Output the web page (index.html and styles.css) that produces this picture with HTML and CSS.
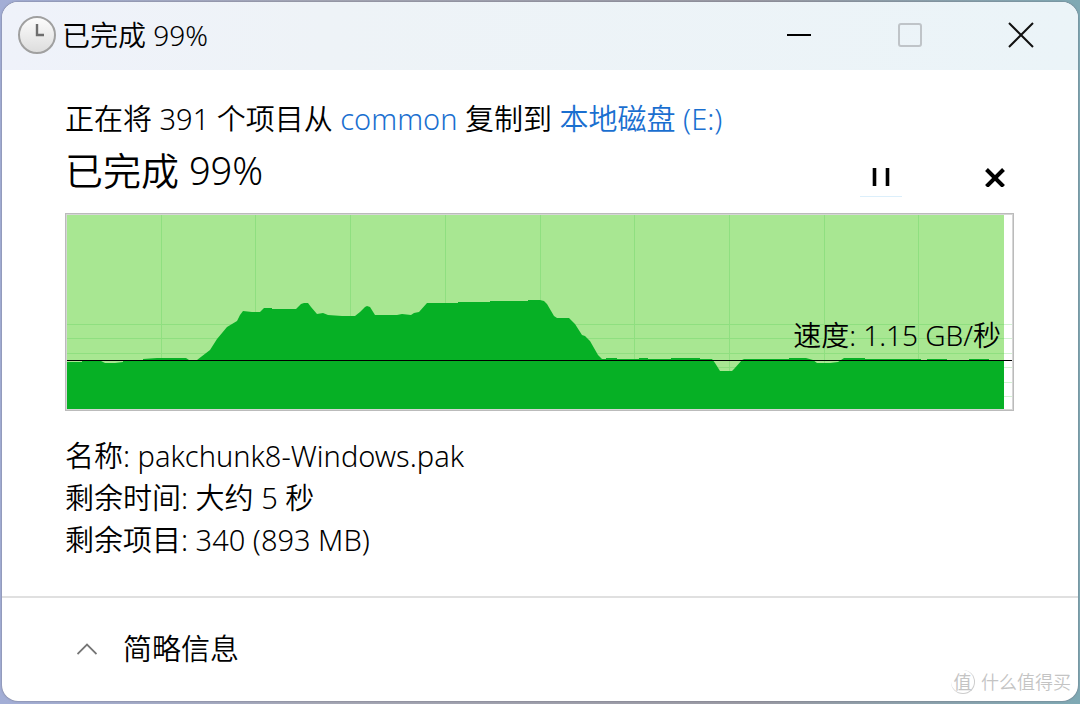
FILE: index.html
```
<!DOCTYPE html>
<html lang="zh-CN">
<head>
    <meta charset="UTF-8">
    <meta name="viewport" content="width=device-width, initial-scale=1.0">
    <title>已完成 99%</title>
    <link rel="stylesheet" href="styles.css">
</head>
<body>
    <div class="window">
        <header class="titlebar">
            <svg class="clock" viewBox="0 0 40 40" aria-hidden="true">
                <defs>
                    <linearGradient id="face" x1="0" y1="0" x2="0" y2="1">
                        <stop offset="0" stop-color="#fdfdfd"/>
                        <stop offset="1" stop-color="#dcdcdc"/>
                    </linearGradient>
                </defs>
                <circle cx="20" cy="20" r="18" fill="url(#face)" stroke="#a0a0a0" stroke-width="2"/>
                <path d="M20 9v11h7" fill="none" stroke="#6e6e6e" stroke-width="2.4"/>
            </svg>
            <span class="caption">已完成 99%</span>
            <div class="window-buttons">
                <button type="button" aria-label="最小化">
                    <svg viewBox="0 0 24 24"><path d="M0 12h24" stroke="#000" stroke-width="2"/></svg>
                </button>
                <button type="button" aria-label="最大化" disabled>
                    <svg viewBox="0 0 24 24"><rect x="1" y="1" width="22" height="22" rx="2" fill="none" stroke="#bfc4c8" stroke-width="2"/></svg>
                </button>
                <button type="button" aria-label="关闭">
                    <svg viewBox="0 0 24 24"><path d="M0 0l24 24M24 0L0 24" stroke="#111" stroke-width="2"/></svg>
                </button>
            </div>
        </header>

        <main class="content">
            <p class="summary">正在将 391 个项目从 <a href="#">common</a> 复制到 <a href="#">本地磁盘 (E:)</a></p>
            <div class="progress-row">
                <h1>已完成 99%</h1>
                <div class="actions">
                    <button type="button" class="pause" aria-label="暂停">
                        <svg viewBox="0 0 20 20"><path d="M3.5 1v18M16.5 1v18" stroke="#000" stroke-width="3.6"/></svg>
                    </button>
                    <button type="button" aria-label="取消">
                        <svg viewBox="0 0 20 20"><path d="M1.5 2.5l17 17M18.5 2.5l-17 17" stroke="#000" stroke-width="4"/></svg>
                    </button>
                </div>
            </div>

            <div class="chart">
                <svg viewBox="0 0 945 194" aria-hidden="true">
                    <path class="row-line" d="M0 109.5h945M0 123.5h945M0 138.5h945M0 152.5h945M0 167.5h945M0 181.5h945"/>
                    <rect class="done" width="937" height="194"/>
                    <path class="grid" d="M0 109.5h937M0 123.5h937M0 138.5h937M0 152.5h937M94.5 0v194M188.5 0v194M283.5 0v194M378.5 0v194M473.5 0v194M567.5 0v194M662.5 0v194M757.5 0v194M851.5 0v194"/>
                    <path class="speed" d="M0 194V147H15V146H34L38 148H48L56 147V146H76V144L90 143H119L122 145H130L143 135L150 124L160 112L170 106L173 100L176 96L185 97H193L197 93H205V94H229L234 89L237 88H241L244 92L250 99L256 98L261 100L275 101H288L293 97L298 92L300 91L303 92L308 100H330L335 99L344 100L347 98L352 97L360 88H391V87H423V86H461V85H473L477 86L480 89L487 101L490 103H502L508 109L515 120L518 121L523 126L531 140L535 144H539V143H550V144H572V143H581V144H604V143H633V144H645L648 148L653 156H665L667 154L675 145L677 144H722V143H739L746 145L750 148H763L771 147L777 143H798V144H854V145H860V144H880V145H902V144H922V145H937V194Z"/>
                    <path class="now" d="M0 145.5h945"/>
                </svg>
                <span class="rate">速度: 1.15 GB/秒</span>
            </div>

            <div class="details">
                <p>名称: pakchunk8-Windows.pak</p>
                <p>剩余时间: 大约 5 秒</p>
                <p>剩余项目: 340 (893 MB)</p>
            </div>
        </main>

        <footer class="footer">
            <button type="button" class="toggle">
                <svg viewBox="0 0 20 12" aria-hidden="true"><path d="M0.5 11L10 1.5L19.5 11" fill="none" stroke="#777" stroke-width="1.8"/></svg>
                简略信息
            </button>
            <div class="watermark"><span class="badge">值</span>什么值得买</div>
        </footer>
    </div>
</body>
</html>
```
FILE: styles.css
```
* {
    box-sizing: border-box;
}
body {
    margin: 0;
    padding: 2px 2px 3px;
    min-height: 100vh;
    display: flex;
    background: linear-gradient(90deg, #a3aed6, #a5a7b5 30%, #9a9aa4 70%, #7fa9b4);
    font-family: "Noto Sans", "Noto Sans CJK SC", sans-serif;
    font-size: 29px;
    font-weight: 350;
    line-height: 42px;
    color: #000;
}
.window {
    flex: 1;
    display: flex;
    flex-direction: column;
    background: #fff;
    border-radius: 16px;
    box-shadow: 0 0 2px #667;
    overflow: hidden;
}
p, h1 {
    margin: 0;
}
button {
    display: flex;
    align-items: center;
    justify-content: center;
    padding: 0;
    border: none;
    background: none;
    font: inherit;
    color: inherit;
}
a {
    color: #1a6fd0;
    text-decoration: none;
}

/* title bar */
.titlebar {
    display: flex;
    align-items: center;
    height: 68px;
    padding: 0 2px 2px 15px;
    background: linear-gradient(90deg, #eff2fa, #eef3f7 30%, #ebf4f8);
}
.clock {
    width: 40px;
    height: 40px;
}
.caption {
    padding-left: 5px;
    font-size: 28px;
}
.window-buttons {
    display: flex;
    margin-left: auto;
}
.window-buttons button {
    width: 111px;
    height: 64px;
}
.window-buttons svg {
    width: 24px;
    height: 24px;
    overflow: visible;
}

/* body */
.content {
    flex: 1;
    padding: 28px 64px 0 63px;
}
.progress-row {
    display: flex;
    justify-content: space-between;
    height: 73px;
}
h1 {
    font-size: 38px;
    font-weight: 350;
    line-height: 60px;
}
.actions {
    display: flex;
    gap: 72px;
    margin-right: -2px;
    padding-top: 17px;
}
.actions button {
    width: 42px;
    height: 40px;
}
.actions svg {
    width: 20px;
    height: 20px;
}
.actions .pause {
    border-bottom: 1px solid #dceffb;
}
.chart {
    position: relative;
    border: 1px solid #bbb;
    outline: 1px solid #d6d6d6;
    outline-offset: -2px;
    padding: 1px;
}
.chart svg {
    display: block;
    width: 100%;
}
.chart path {
    fill: none;
}
.chart .row-line {
    stroke: #d3f1d3;
}
.chart .done {
    fill: #a8e792;
}
.chart .grid {
    stroke: #8fdf80;
}
.chart .speed {
    fill: #06b025;
}
.chart .now {
    stroke: #000;
}
.rate {
    position: absolute;
    right: 12px;
    bottom: 54px;
    font-size: 28px;
}
.details {
    padding-top: 24px;
}

/* footer */
.footer {
    position: relative;
    height: 105px;
    padding: 30px 75px 0;
    border-top: 2px solid #e0e0e0;
}
.toggle {
    gap: 26px;
}
.toggle svg {
    width: 20px;
    height: 12px;
}
.watermark {
    position: absolute;
    right: 7px;
    bottom: 7px;
    display: flex;
    align-items: center;
    gap: 6px;
    font-size: 18px;
    line-height: 24px;
    color: #c4c4c4;
}
.badge {
    width: 24px;
    height: 24px;
    border-right: 1px solid #ccc;
    border-bottom: 1px solid #ccc;
    border-radius: 50%;
    text-align: center;
    font-weight: 400;
}
```
